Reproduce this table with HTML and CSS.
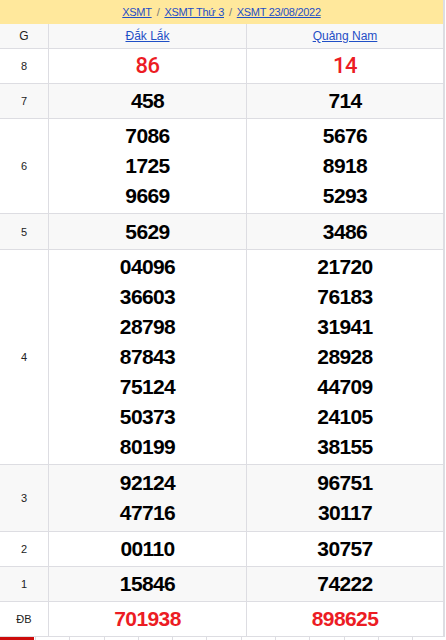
FILE: index.html
```html
<!DOCTYPE html>
<html lang="vi">
<head>
<meta charset="utf-8">
<title>XSMT 23/08/2022</title>
<link rel="stylesheet" href="styles.css">
</head>
<body>
<div class="board">
  <div class="crumbs">
    <a href="#">XSMT</a><span class="sep">/</span><a href="#">XSMT Thứ 3</a><span class="sep">/</span><a href="#">XSMT 23/08/2022</a>
  </div>
  <div class="row head">
    <div class="cell label">G</div>
    <div class="cell"><a href="#">Đắk Lắk</a></div>
    <div class="cell"><a href="#">Quảng Nam</a></div>
  </div>
  <div class="row">
    <div class="cell label">8</div>
    <div class="cell num red light">86</div>
    <div class="cell num red light">14</div>
  </div>
  <div class="row alt">
    <div class="cell label">7</div>
    <div class="cell num">458</div>
    <div class="cell num">714</div>
  </div>
  <div class="row">
    <div class="cell label">6</div>
    <div class="cell num"><span>7086</span><span>1725</span><span>9669</span></div>
    <div class="cell num"><span>5676</span><span>8918</span><span>5293</span></div>
  </div>
  <div class="row alt plus1">
    <div class="cell label">5</div>
    <div class="cell num">5629</div>
    <div class="cell num">3486</div>
  </div>
  <div class="row">
    <div class="cell label">4</div>
    <div class="cell num"><span>04096</span><span>36603</span><span>28798</span><span>87843</span><span>75124</span><span>50373</span><span>80199</span></div>
    <div class="cell num"><span>21720</span><span>76183</span><span>31941</span><span>28928</span><span>44709</span><span>24105</span><span>38155</span></div>
  </div>
  <div class="row alt plus2">
    <div class="cell label">3</div>
    <div class="cell num"><span>92124</span><span>47716</span></div>
    <div class="cell num"><span>96751</span><span>30117</span></div>
  </div>
  <div class="row">
    <div class="cell label">2</div>
    <div class="cell num">00110</div>
    <div class="cell num">30757</div>
  </div>
  <div class="row alt">
    <div class="cell label">1</div>
    <div class="cell num">15846</div>
    <div class="cell num">74222</div>
  </div>
  <div class="row">
    <div class="cell label">ĐB</div>
    <div class="cell num red">701938</div>
    <div class="cell num red">898625</div>
  </div>
</div>
<div class="tabs">
  <div class="tab active"></div><div class="tab"></div><div class="tab"></div><div class="tab"></div><div class="tab"></div><div class="tab"></div><div class="tab"></div><div class="tab"></div><div class="tab"></div><div class="tab"></div><div class="tab"></div><div class="tab"></div><div class="tab"></div>
</div>
</body>
</html>
```
FILE: styles.css
```css
* { box-sizing: border-box; }
html, body { margin: 0; padding: 0; background: #fff; }
body { font-family: Arial, "Liberation Sans", sans-serif; color: #000; width: 446px; }
a { color: #1f4fc6; text-decoration: underline; }

.board { width: 445px; border-right: 2px solid #dddde2; }

.crumbs {
  height: 24px;
  background: #ffe89c;
  display: flex;
  align-items: center;
  justify-content: center;
  font-size: 11px;
  letter-spacing: -0.3px;
  line-height: 24px;
}
.crumbs .sep { color: #777; margin: 0 5px; }

.row {
  display: grid;
  grid-template-columns: 49px 198px 196px;
  border-bottom: 1px solid #dddde2;
}
.row.head, .row.alt { background: #f8f8f8; }
.row.head { height: 25px; }
.row.plus1 .num { padding-top: 3px; }
.row.plus2 .num { padding-top: 3px; padding-bottom: 3px; }

.cell {
  border-right: 1px solid #dddde2;
  display: flex;
  flex-direction: column;
  align-items: center;
  justify-content: center;
}
.cell:last-child { border-right: 0; }
.head .cell { font-size: 12px; }
.label { font-size: 11px; color: #222; }
.head .label { font-size: 12px; }

.num {
  padding: 2px 0;
  font-size: 21px;
  font-weight: bold;
  line-height: 30px;
  letter-spacing: -0.6px;
  min-height: 34px;
}
.num span { display: block; }
.red { color: #ec1c24; }
.light { font-family: Roboto, Arial, sans-serif; font-weight: 500; font-size: 22px; letter-spacing: -0.5px; }

.tabs { display: flex; }
.tab { width: 34.3px; height: 30px; border-left: 1px solid #dddde2; background: #fff; flex: none; }
.tab.active { background: #cc0b0b; border-left: 0; width: 34px; margin-right: 1px; }
```
